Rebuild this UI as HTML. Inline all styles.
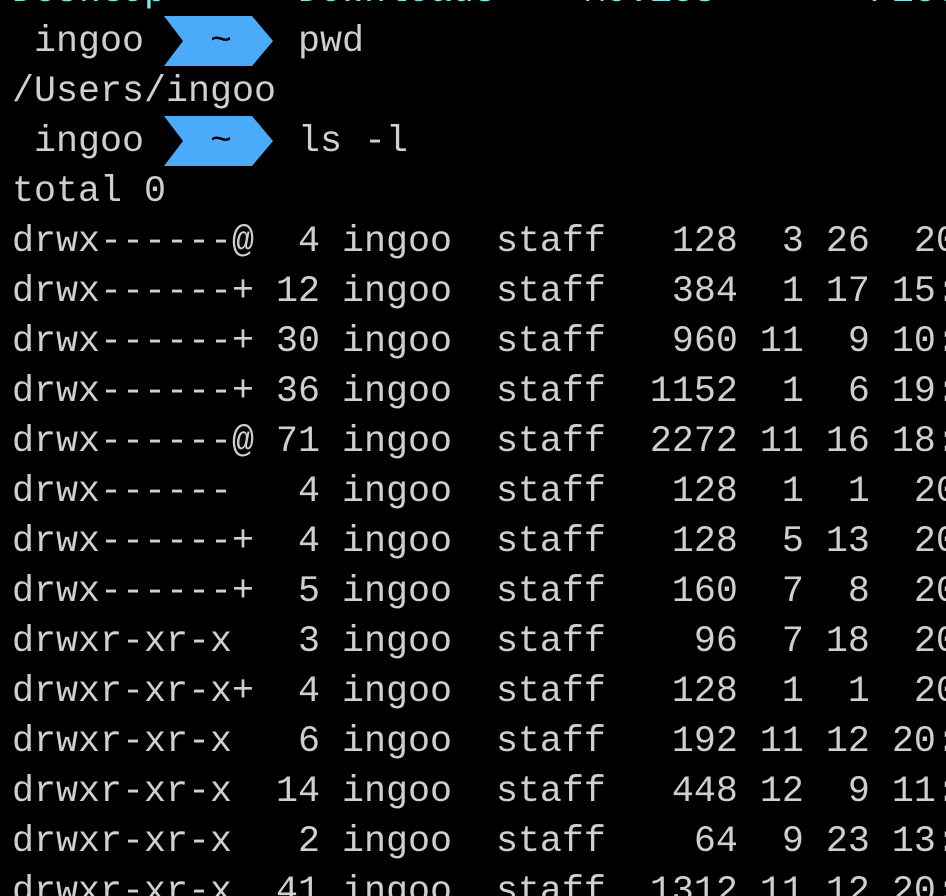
<!DOCTYPE html>
<html><head><style>
html,body{margin:0;padding:0;background:#000;width:946px;height:896px;overflow:hidden}
#w{position:absolute;left:0;top:0;width:946px;height:896px;overflow:hidden}
pre{position:absolute;left:12px;top:-33px;margin:0;font-family:"Liberation Mono",monospace;font-size:36.67px;line-height:50px;color:#cfcfcf;white-space:pre}
.c{color:#7fe6ee}
svg{position:absolute;left:0;top:0}
</style></head><body><div id="w">
<svg width="946" height="896">
<polygon points="164,16 252,16 273,41 252,66 164,66 183,41" fill="#4aabfa"/>
<polygon points="164,116 252,116 273,141 252,166 164,166 183,141" fill="#4aabfa"/>
</svg>
<pre><span class="c">Desktop      Downloads    Movies       Pictures</span>
 ingoo   <span style="color:#000">~</span>   pwd
/Users/ingoo
 ingoo   <span style="color:#000">~</span>   ls -l
total 0
drwx------@  4 ingoo  staff   128  3 26  2020
drwx------+ 12 ingoo  staff   384  1 17 15:00
drwx------+ 30 ingoo  staff   960 11  9 10:00
drwx------+ 36 ingoo  staff  1152  1  6 19:00
drwx------@ 71 ingoo  staff  2272 11 16 18:00
drwx------   4 ingoo  staff   128  1  1  2020
drwx------+  4 ingoo  staff   128  5 13  2020
drwx------+  5 ingoo  staff   160  7  8  2020
drwxr-xr-x   3 ingoo  staff    96  7 18  2020
drwxr-xr-x+  4 ingoo  staff   128  1  1  2020
drwxr-xr-x   6 ingoo  staff   192 11 12 20:00
drwxr-xr-x  14 ingoo  staff   448 12  9 11:00
drwxr-xr-x   2 ingoo  staff    64  9 23 13:00
drwxr-xr-x  41 ingoo  staff  1312 11 12 20:00</pre>
</div></body></html>
